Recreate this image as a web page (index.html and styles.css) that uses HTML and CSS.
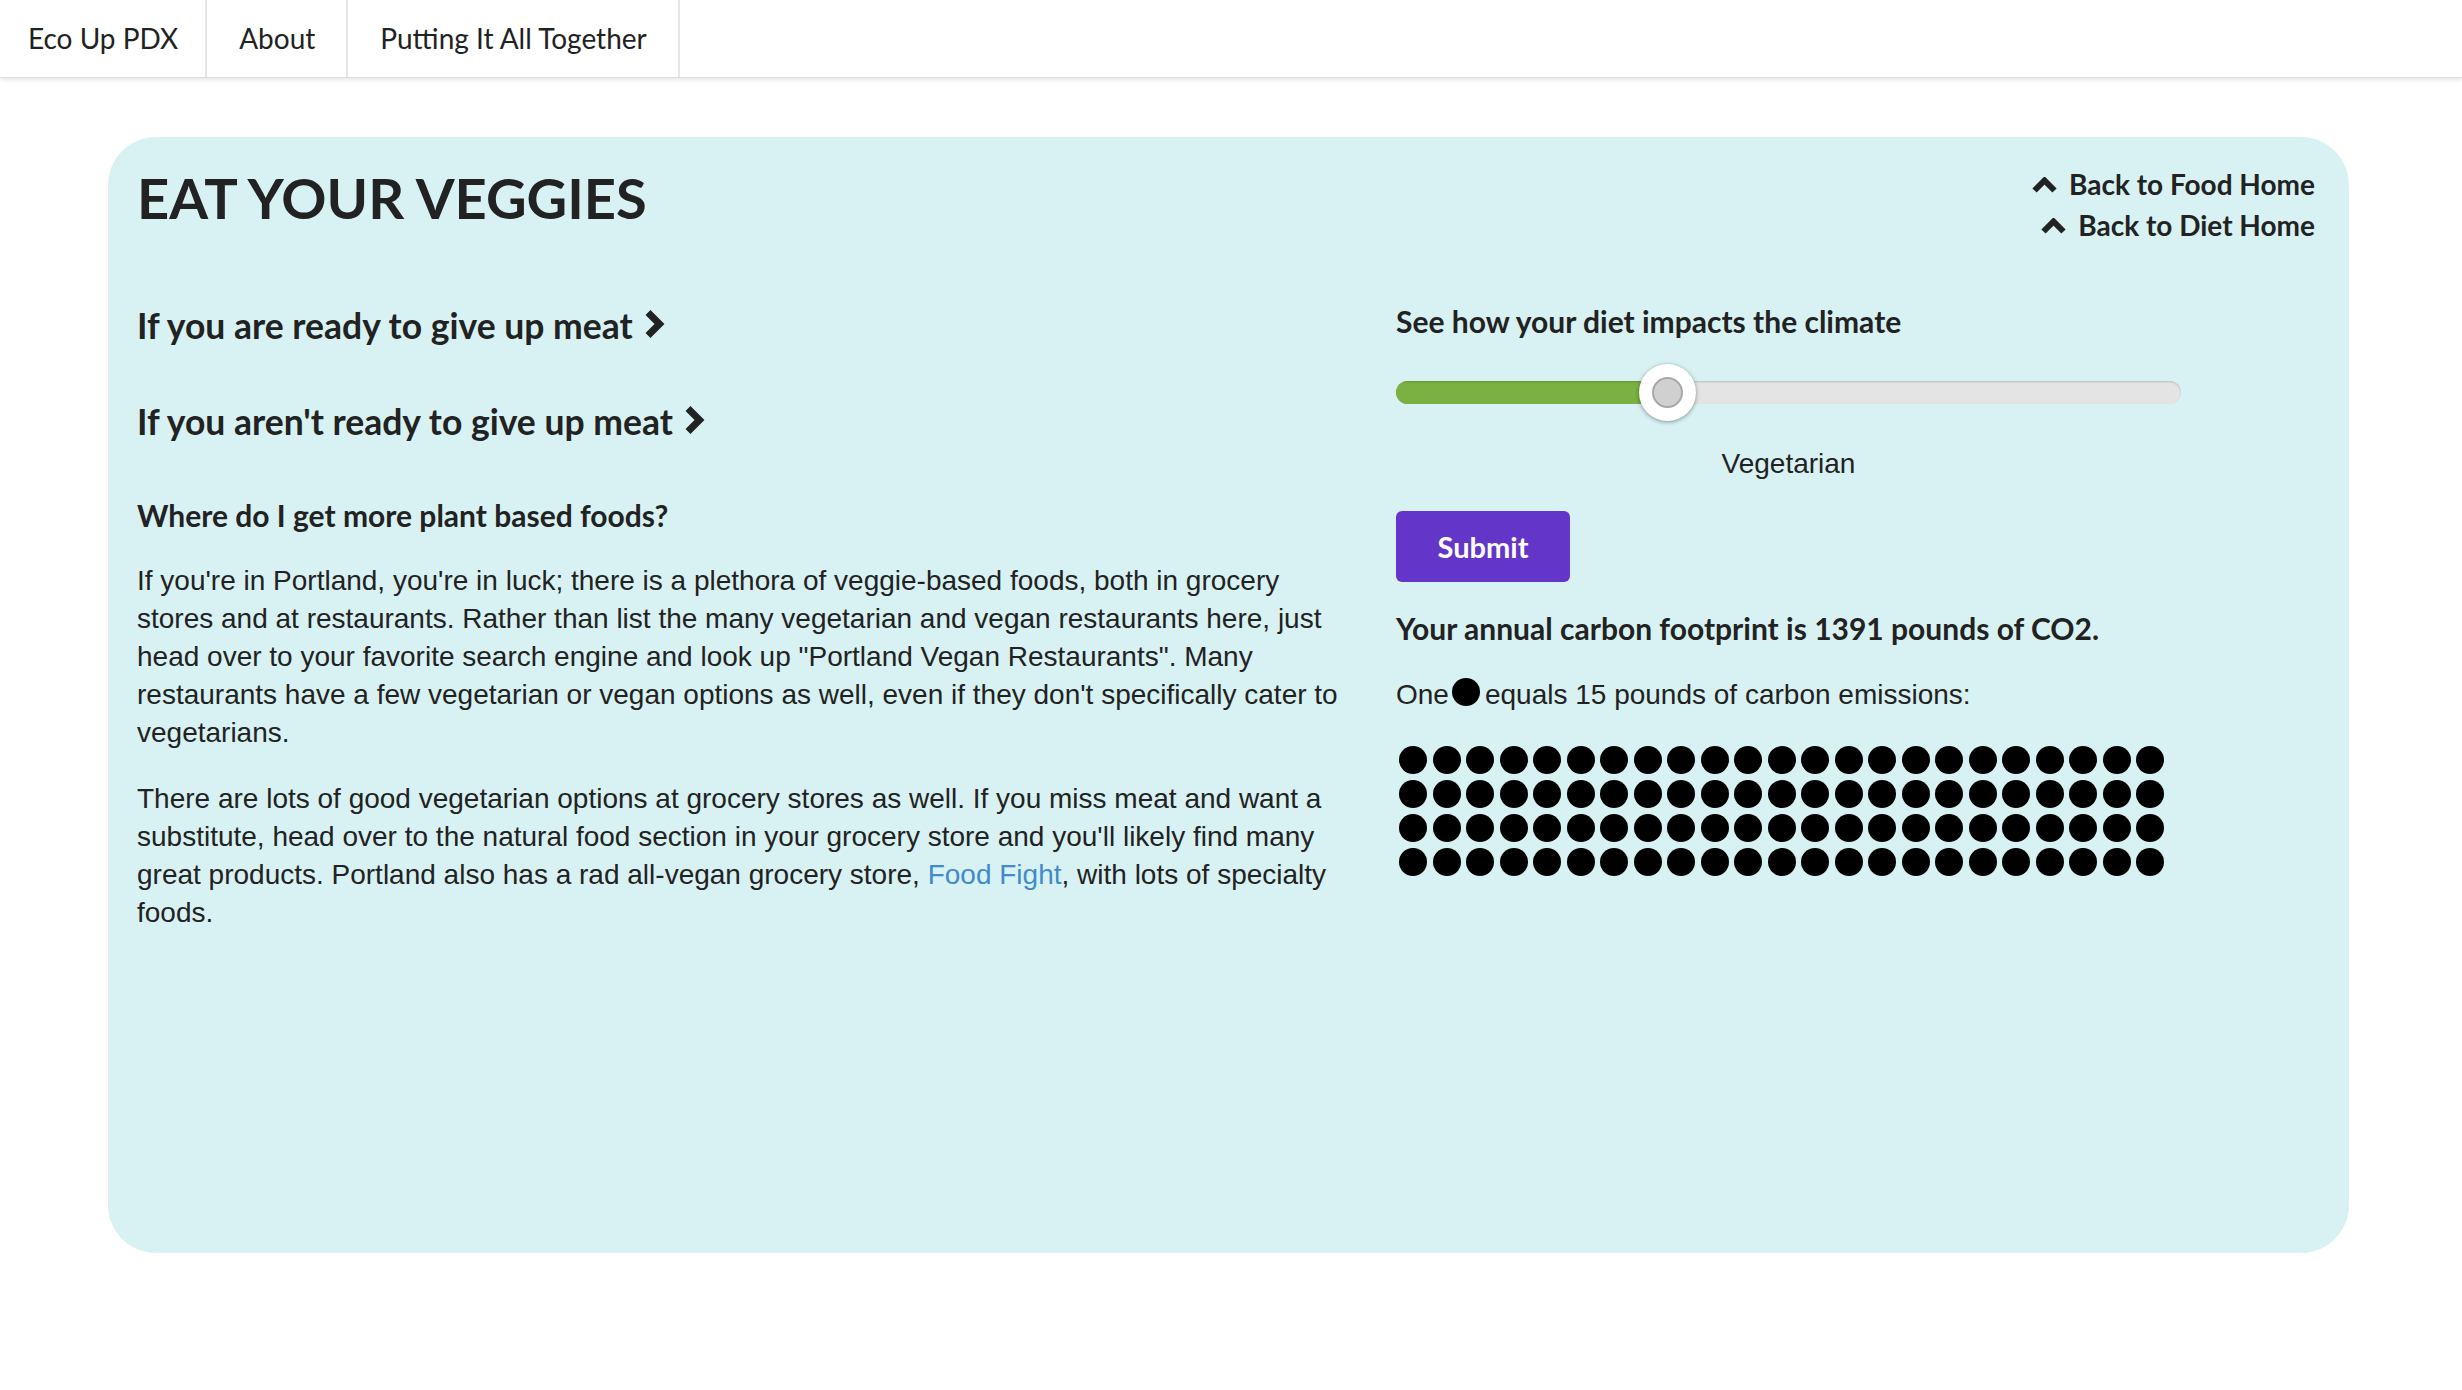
FILE: index.html
```
<!DOCTYPE html>
<html lang="en">
<head>
<meta charset="utf-8">
<title>Eat Your Veggies - Eco Up PDX</title>
<link rel="stylesheet" href="styles.css">
</head>
<body>
<nav class="topnav">
  <a class="nav-item brand" href="#">Eco Up PDX</a>
  <a class="nav-item" href="#">About</a>
  <a class="nav-item" href="#">Putting It All Together</a>
</nav>
<main class="page">
  <section class="card">
    <header class="card-head">
      <h1 class="title">EAT YOUR VEGGIES</h1>
      <div class="back-links">
        <a class="back-link" href="#"><svg class="icon-up" viewBox="0 0 25 16" aria-hidden="true"><polyline points="2.5,13.5 12.5,3.5 22.5,13.5" /></svg><span>Back to Food Home</span></a>
        <a class="back-link" href="#"><svg class="icon-up" viewBox="0 0 25 16" aria-hidden="true"><polyline points="2.5,13.5 12.5,3.5 22.5,13.5" /></svg><span>Back to Diet Home</span></a>
      </div>
    </header>
    <div class="card-body">
      <div class="col-left">
        <h3 class="option"><a href="#">If you are ready to give up meat</a><svg class="icon-right" viewBox="0 0 22 30" aria-hidden="true"><polyline points="4,3.5 15.5,15 4,26.5" /></svg></h3>
        <h3 class="option"><a href="#">If you aren't ready to give up meat</a><svg class="icon-right" viewBox="0 0 22 30" aria-hidden="true"><polyline points="4,3.5 15.5,15 4,26.5" /></svg></h3>
        <h4 class="subhead">Where do I get more plant based foods?</h4>
        <p class="body-text">If you're in Portland, you're in luck; there is a plethora of veggie-based foods, both in grocery stores and at restaurants. Rather than list the many vegetarian and vegan restaurants here, just head over to your favorite search engine and look up "Portland Vegan Restaurants". Many restaurants have a few vegetarian or vegan options as well, even if they don't specifically cater to vegetarians.</p>
        <p class="body-text">There are lots of good vegetarian options at grocery stores as well. If you miss meat and want a substitute, head over to the natural food section in your grocery store and you'll likely find many great products. Portland also has a rad all-vegan grocery store, <a class="link" href="#">Food Fight</a>, with lots of specialty foods.</p>
      </div>
      <div class="col-right">
        <h4 class="subhead">See how your diet impacts the climate</h4>
        <div class="slider">
          <div class="track"><div class="fill" style="width:272px"></div></div>
          <div class="thumb" style="left:243px"><span class="thumb-core"></span></div>
        </div>
        <div class="slider-label">Vegetarian</div>
        <button class="submit" type="button">Submit</button>
        <p class="footprint">Your annual carbon footprint is 1391 pounds of CO2.</p>
        <p class="legend">One<span class="legend-dot"></span>equals 15 pounds of carbon emissions:</p>
        <div class="dots">
          <span class="dot"></span><span class="dot"></span><span class="dot"></span><span class="dot"></span><span class="dot"></span><span class="dot"></span><span class="dot"></span><span class="dot"></span><span class="dot"></span><span class="dot"></span><span class="dot"></span><span class="dot"></span><span class="dot"></span><span class="dot"></span><span class="dot"></span><span class="dot"></span><span class="dot"></span><span class="dot"></span><span class="dot"></span><span class="dot"></span><span class="dot"></span><span class="dot"></span><span class="dot"></span>
          <span class="dot"></span><span class="dot"></span><span class="dot"></span><span class="dot"></span><span class="dot"></span><span class="dot"></span><span class="dot"></span><span class="dot"></span><span class="dot"></span><span class="dot"></span><span class="dot"></span><span class="dot"></span><span class="dot"></span><span class="dot"></span><span class="dot"></span><span class="dot"></span><span class="dot"></span><span class="dot"></span><span class="dot"></span><span class="dot"></span><span class="dot"></span><span class="dot"></span><span class="dot"></span>
          <span class="dot"></span><span class="dot"></span><span class="dot"></span><span class="dot"></span><span class="dot"></span><span class="dot"></span><span class="dot"></span><span class="dot"></span><span class="dot"></span><span class="dot"></span><span class="dot"></span><span class="dot"></span><span class="dot"></span><span class="dot"></span><span class="dot"></span><span class="dot"></span><span class="dot"></span><span class="dot"></span><span class="dot"></span><span class="dot"></span><span class="dot"></span><span class="dot"></span><span class="dot"></span>
          <span class="dot"></span><span class="dot"></span><span class="dot"></span><span class="dot"></span><span class="dot"></span><span class="dot"></span><span class="dot"></span><span class="dot"></span><span class="dot"></span><span class="dot"></span><span class="dot"></span><span class="dot"></span><span class="dot"></span><span class="dot"></span><span class="dot"></span><span class="dot"></span><span class="dot"></span><span class="dot"></span><span class="dot"></span><span class="dot"></span><span class="dot"></span><span class="dot"></span><span class="dot"></span>
        </div>
      </div>
    </div>
  </section>
</main>
</body>
</html>
```
FILE: styles.css
```
* { box-sizing: border-box; }

html, body {
  margin: 0;
  padding: 0;
  background: #ffffff;
}

body {
  font-family: "Liberation Sans", Arial, sans-serif;
  font-size: 28px;
  line-height: 38px;
  color: #222222;
}

a { text-decoration: none; color: inherit; }

/* ---------- top navigation ---------- */
.topnav {
  display: flex;
  height: 78px;
  background: #ffffff;
  border-bottom: 1px solid #dcdcdc;
  box-shadow: 0 2px 4px rgba(0, 0, 0, 0.10);
}

.nav-item {
  display: flex;
  align-items: center;
  padding: 0 31px 2px 32px;
  font-family: Lato, "Open Sans", sans-serif;
  font-size: 28px;
  color: #222222;
  border-right: 2px solid #e6e6e6;
}

.nav-item.brand { padding-left: 28px; padding-right: 27px; }

/* ---------- page / card ---------- */
.page {
  padding: 59px 113px 0 108px;
}

.card {
  height: 1116px;
  background: #d8f2f3;
  border-radius: 48px;
  padding: 27px 34px 0 29px;
}

.card-head {
  display: flex;
  justify-content: space-between;
  align-items: flex-start;
}

.title {
  margin: 0;
  font-family: Lato, "Open Sans", sans-serif;
  font-weight: 700;
  font-size: 56px;
  line-height: 1.2;
  color: #222222;
}

.back-links {
  display: flex;
  flex-direction: column;
  align-items: flex-end;
}

.back-link {
  display: flex;
  align-items: center;
  gap: 12px;
  font-family: Lato, "Open Sans", sans-serif;
  font-weight: 700;
  font-size: 28px;
  line-height: 41px;
  color: #222222;
}

.icon-up {
  width: 25px;
  height: 16px;
  margin-top: 1px;
  fill: none;
  stroke: #222222;
  stroke-width: 6;
  stroke-linecap: butt;
  stroke-linejoin: miter;
}

.card-body {
  display: flex;
  gap: 46px;
  margin-top: 57px;
}

.col-left {
  width: 1213px;
  flex: none;
}

.col-right {
  flex: 1;
  min-width: 0;
}

.option {
  display: flex;
  align-items: center;
  gap: 11px;
  margin: 2px 0 55px 0;
  font-family: Lato, "Open Sans", sans-serif;
  font-weight: 700;
  font-size: 35.5px;
  line-height: 41px;
  color: #222222;
}

.icon-right {
  width: 22px;
  height: 30px;
  margin-top: -3px;
  fill: none;
  stroke: #222222;
  stroke-width: 7;
  stroke-linecap: butt;
  stroke-linejoin: miter;
}

.subhead {
  margin: 0;
  font-family: Lato, "Open Sans", sans-serif;
  font-weight: 700;
  font-size: 30px;
  line-height: 36px;
  color: #222222;
}

.col-left .subhead { margin: 0 0 29px 0; }

.body-text {
  margin: 0 0 28px 0;
}

.link { color: #428bca; }

/* ---------- slider ---------- */
.slider {
  position: relative;
  width: 785px;
  height: 58px;
  margin-top: 25px;
}

.track {
  position: relative;
  top: 17px;
  height: 23px;
  border-radius: 12px;
  background: #e4e4e4;
  box-shadow: inset 0 1px 2px rgba(0, 0, 0, 0.18);
  overflow: hidden;
}

.fill {
  height: 100%;
  background: #7bb142;
  box-shadow: inset 0 1px 2px rgba(0, 0, 0, 0.2);
}

.thumb {
  position: absolute;
  top: 0;
  width: 57px;
  height: 57px;
  border-radius: 50%;
  background: #ffffff;
  box-shadow: 0 1px 4px rgba(0, 0, 0, 0.4);
  display: flex;
  align-items: center;
  justify-content: center;
}

.thumb-core {
  width: 31px;
  height: 31px;
  border-radius: 50%;
  background: #d0d0d0;
  border: 2px solid #a8a8a8;
}

.slider-label {
  width: 785px;
  margin-top: 23px;
  text-align: center;
}

.submit {
  display: block;
  margin-top: 28px;
  width: 174px;
  height: 71px;
  border: none;
  border-radius: 6px;
  background: #6435c9;
  color: #ffffff;
  font-family: Lato, "Open Sans", sans-serif;
  font-weight: 700;
  font-size: 29px;
  padding: 0;
}

.footprint {
  margin: 28px 0 0 0;
  font-family: Lato, "Open Sans", sans-serif;
  font-weight: 700;
  font-size: 30px;
  line-height: 36px;
}

.legend {
  margin: 30px 0 0 0;
}

.legend-dot {
  display: inline-block;
  width: 28px;
  height: 28px;
  margin: 0 5px 0 3px;
  border-radius: 50%;
  background: #000000;
  vertical-align: -2px;
}

.dots {
  display: grid;
  grid-template-columns: repeat(23, 28px);
  column-gap: 5.5px;
  row-gap: 6px;
  margin: 32px 0 0 3px;
}

.dot {
  width: 28px;
  height: 28px;
  border-radius: 50%;
  background: #000000;
}
```
